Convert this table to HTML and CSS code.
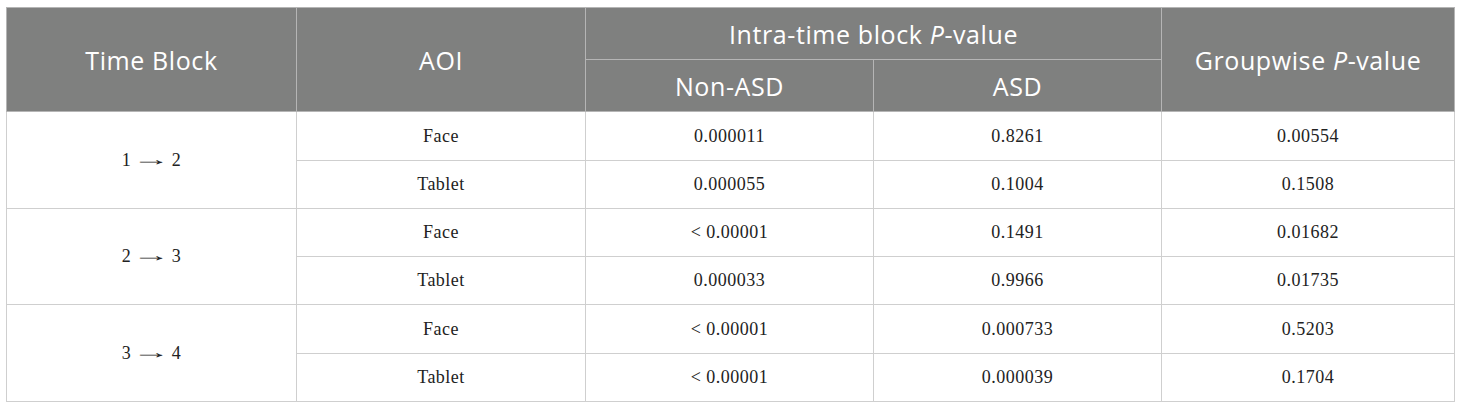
FILE: index.html
```html
<!DOCTYPE html>
<html>
<head>
<meta charset="utf-8">
<link rel="stylesheet" href="styles.css">
</head>
<body>
<table class="data">
  <colgroup>
    <col class="c1"><col class="c2"><col class="c3"><col class="c4"><col class="c5">
  </colgroup>
  <thead>
    <tr class="h1">
      <th rowspan="2">Time Block</th>
      <th rowspan="2">AOI</th>
      <th colspan="2">Intra-time block <i>P</i>-value</th>
      <th rowspan="2">Groupwise <i>P</i>-value</th>
    </tr>
    <tr class="h2">
      <th>Non-ASD</th>
      <th>ASD</th>
    </tr>
  </thead>
  <tbody>
    <tr class="ra"><td rowspan="2">1<span class="arr">→</span>2</td><td>Face</td><td>0.000011</td><td>0.8261</td><td>0.00554</td></tr>
    <tr class="rb"><td>Tablet</td><td>0.000055</td><td>0.1004</td><td>0.1508</td></tr>
    <tr class="rb"><td rowspan="2">2<span class="arr">→</span>3</td><td>Face</td><td>&lt; 0.00001</td><td>0.1491</td><td>0.01682</td></tr>
    <tr class="rb"><td>Tablet</td><td>0.000033</td><td>0.9966</td><td>0.01735</td></tr>
    <tr class="ra"><td rowspan="2">3<span class="arr">→</span>4</td><td>Face</td><td>&lt; 0.00001</td><td>0.000733</td><td>0.5203</td></tr>
    <tr class="rb"><td>Tablet</td><td>&lt; 0.00001</td><td>0.000039</td><td>0.1704</td></tr>
  </tbody>
</table>
</body>
</html>
```
FILE: styles.css
```css
html, body { background: #fff; }
body { margin: 7px 0 0 6px; }
.data {
  border-collapse: collapse;
  table-layout: fixed;
  width: 1448px;
}
.c1 { width: 290px; }
.c2 { width: 289px; }
.c3 { width: 288px; }
.c4 { width: 288px; }
.c5 { width: 293px; }
.data th {
  background: #7f807f;
  color: #fff;
  font-family: "Open Sans", "Noto Sans", sans-serif;
  font-weight: 400;
  font-size: 25px;
  letter-spacing: 0.6px;
  border: 1px solid #b5b5b5;
  text-align: center;
  padding: 0;
  height: 51px;
}
.data th i { font-style: italic; }
.data td {
  font-family: "Liberation Serif", "Times New Roman", serif;
  font-size: 18px;
  letter-spacing: 0.5px;
  color: #222;
  border: 1px solid #cfcfcf;
  text-align: center;
  padding: 0;
  height: 47px;
}
.ra td { height: 48px; }
.arr {
  display: inline-block;
  transform: scaleX(2.1);
  margin: 0 11px;
  position: relative;
  top: -1px;
}
```
